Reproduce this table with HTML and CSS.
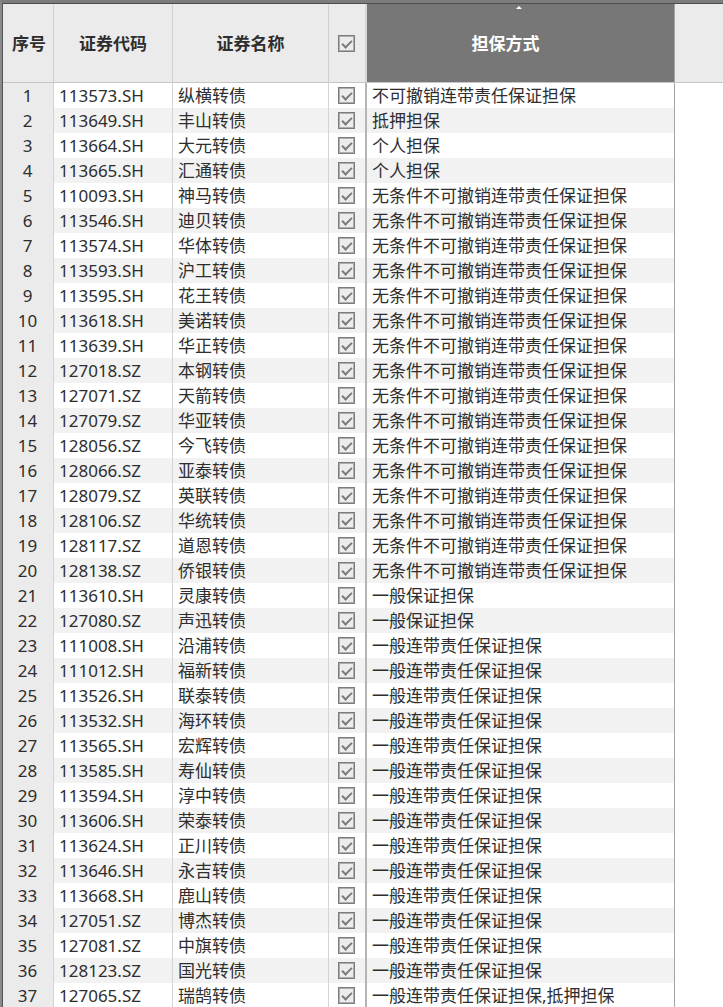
FILE: index.html
```html
<!DOCTYPE html>
<html lang="zh-CN">
<head>
<meta charset="utf-8">
<title>担保方式</title>
<link rel="stylesheet" href="styles.css">
</head>
<body>
<div class="frame">
  <div class="grip"></div>
  <div class="row head">
    <div class="c c1">序号</div>
    <div class="c c2">证券代码</div>
    <div class="c c3">证券名称</div>
    <div class="c c4"><span class="cb"></span></div>
    <div class="c c5 sorted"><span class="arrow"></span><span class="ht">担保方式</span></div>
    <div class="c c6"></div>
  </div>
  <div class="body" id="body">
    <div class="row"><div class="c c1">1</div><div class="c c2">113573.SH</div><div class="c c3">纵横转债</div><div class="c c4"><span class="cb"></span></div><div class="c c5">不可撤销连带责任保证担保</div><div class="c c6"></div></div>
    <div class="row"><div class="c c1">2</div><div class="c c2">113649.SH</div><div class="c c3">丰山转债</div><div class="c c4"><span class="cb"></span></div><div class="c c5">抵押担保</div><div class="c c6"></div></div>
    <div class="row"><div class="c c1">3</div><div class="c c2">113664.SH</div><div class="c c3">大元转债</div><div class="c c4"><span class="cb"></span></div><div class="c c5">个人担保</div><div class="c c6"></div></div>
    <div class="row"><div class="c c1">4</div><div class="c c2">113665.SH</div><div class="c c3">汇通转债</div><div class="c c4"><span class="cb"></span></div><div class="c c5">个人担保</div><div class="c c6"></div></div>
    <div class="row"><div class="c c1">5</div><div class="c c2">110093.SH</div><div class="c c3">神马转债</div><div class="c c4"><span class="cb"></span></div><div class="c c5">无条件不可撤销连带责任保证担保</div><div class="c c6"></div></div>
    <div class="row"><div class="c c1">6</div><div class="c c2">113546.SH</div><div class="c c3">迪贝转债</div><div class="c c4"><span class="cb"></span></div><div class="c c5">无条件不可撤销连带责任保证担保</div><div class="c c6"></div></div>
    <div class="row"><div class="c c1">7</div><div class="c c2">113574.SH</div><div class="c c3">华体转债</div><div class="c c4"><span class="cb"></span></div><div class="c c5">无条件不可撤销连带责任保证担保</div><div class="c c6"></div></div>
    <div class="row"><div class="c c1">8</div><div class="c c2">113593.SH</div><div class="c c3">沪工转债</div><div class="c c4"><span class="cb"></span></div><div class="c c5">无条件不可撤销连带责任保证担保</div><div class="c c6"></div></div>
    <div class="row"><div class="c c1">9</div><div class="c c2">113595.SH</div><div class="c c3">花王转债</div><div class="c c4"><span class="cb"></span></div><div class="c c5">无条件不可撤销连带责任保证担保</div><div class="c c6"></div></div>
    <div class="row"><div class="c c1">10</div><div class="c c2">113618.SH</div><div class="c c3">美诺转债</div><div class="c c4"><span class="cb"></span></div><div class="c c5">无条件不可撤销连带责任保证担保</div><div class="c c6"></div></div>
    <div class="row"><div class="c c1">11</div><div class="c c2">113639.SH</div><div class="c c3">华正转债</div><div class="c c4"><span class="cb"></span></div><div class="c c5">无条件不可撤销连带责任保证担保</div><div class="c c6"></div></div>
    <div class="row"><div class="c c1">12</div><div class="c c2">127018.SZ</div><div class="c c3">本钢转债</div><div class="c c4"><span class="cb"></span></div><div class="c c5">无条件不可撤销连带责任保证担保</div><div class="c c6"></div></div>
    <div class="row"><div class="c c1">13</div><div class="c c2">127071.SZ</div><div class="c c3">天箭转债</div><div class="c c4"><span class="cb"></span></div><div class="c c5">无条件不可撤销连带责任保证担保</div><div class="c c6"></div></div>
    <div class="row"><div class="c c1">14</div><div class="c c2">127079.SZ</div><div class="c c3">华亚转债</div><div class="c c4"><span class="cb"></span></div><div class="c c5">无条件不可撤销连带责任保证担保</div><div class="c c6"></div></div>
    <div class="row"><div class="c c1">15</div><div class="c c2">128056.SZ</div><div class="c c3">今飞转债</div><div class="c c4"><span class="cb"></span></div><div class="c c5">无条件不可撤销连带责任保证担保</div><div class="c c6"></div></div>
    <div class="row"><div class="c c1">16</div><div class="c c2">128066.SZ</div><div class="c c3">亚泰转债</div><div class="c c4"><span class="cb"></span></div><div class="c c5">无条件不可撤销连带责任保证担保</div><div class="c c6"></div></div>
    <div class="row"><div class="c c1">17</div><div class="c c2">128079.SZ</div><div class="c c3">英联转债</div><div class="c c4"><span class="cb"></span></div><div class="c c5">无条件不可撤销连带责任保证担保</div><div class="c c6"></div></div>
    <div class="row"><div class="c c1">18</div><div class="c c2">128106.SZ</div><div class="c c3">华统转债</div><div class="c c4"><span class="cb"></span></div><div class="c c5">无条件不可撤销连带责任保证担保</div><div class="c c6"></div></div>
    <div class="row"><div class="c c1">19</div><div class="c c2">128117.SZ</div><div class="c c3">道恩转债</div><div class="c c4"><span class="cb"></span></div><div class="c c5">无条件不可撤销连带责任保证担保</div><div class="c c6"></div></div>
    <div class="row"><div class="c c1">20</div><div class="c c2">128138.SZ</div><div class="c c3">侨银转债</div><div class="c c4"><span class="cb"></span></div><div class="c c5">无条件不可撤销连带责任保证担保</div><div class="c c6"></div></div>
    <div class="row"><div class="c c1">21</div><div class="c c2">113610.SH</div><div class="c c3">灵康转债</div><div class="c c4"><span class="cb"></span></div><div class="c c5">一般保证担保</div><div class="c c6"></div></div>
    <div class="row"><div class="c c1">22</div><div class="c c2">127080.SZ</div><div class="c c3">声迅转债</div><div class="c c4"><span class="cb"></span></div><div class="c c5">一般保证担保</div><div class="c c6"></div></div>
    <div class="row"><div class="c c1">23</div><div class="c c2">111008.SH</div><div class="c c3">沿浦转债</div><div class="c c4"><span class="cb"></span></div><div class="c c5">一般连带责任保证担保</div><div class="c c6"></div></div>
    <div class="row"><div class="c c1">24</div><div class="c c2">111012.SH</div><div class="c c3">福新转债</div><div class="c c4"><span class="cb"></span></div><div class="c c5">一般连带责任保证担保</div><div class="c c6"></div></div>
    <div class="row"><div class="c c1">25</div><div class="c c2">113526.SH</div><div class="c c3">联泰转债</div><div class="c c4"><span class="cb"></span></div><div class="c c5">一般连带责任保证担保</div><div class="c c6"></div></div>
    <div class="row"><div class="c c1">26</div><div class="c c2">113532.SH</div><div class="c c3">海环转债</div><div class="c c4"><span class="cb"></span></div><div class="c c5">一般连带责任保证担保</div><div class="c c6"></div></div>
    <div class="row"><div class="c c1">27</div><div class="c c2">113565.SH</div><div class="c c3">宏辉转债</div><div class="c c4"><span class="cb"></span></div><div class="c c5">一般连带责任保证担保</div><div class="c c6"></div></div>
    <div class="row"><div class="c c1">28</div><div class="c c2">113585.SH</div><div class="c c3">寿仙转债</div><div class="c c4"><span class="cb"></span></div><div class="c c5">一般连带责任保证担保</div><div class="c c6"></div></div>
    <div class="row"><div class="c c1">29</div><div class="c c2">113594.SH</div><div class="c c3">淳中转债</div><div class="c c4"><span class="cb"></span></div><div class="c c5">一般连带责任保证担保</div><div class="c c6"></div></div>
    <div class="row"><div class="c c1">30</div><div class="c c2">113606.SH</div><div class="c c3">荣泰转债</div><div class="c c4"><span class="cb"></span></div><div class="c c5">一般连带责任保证担保</div><div class="c c6"></div></div>
    <div class="row"><div class="c c1">31</div><div class="c c2">113624.SH</div><div class="c c3">正川转债</div><div class="c c4"><span class="cb"></span></div><div class="c c5">一般连带责任保证担保</div><div class="c c6"></div></div>
    <div class="row"><div class="c c1">32</div><div class="c c2">113646.SH</div><div class="c c3">永吉转债</div><div class="c c4"><span class="cb"></span></div><div class="c c5">一般连带责任保证担保</div><div class="c c6"></div></div>
    <div class="row"><div class="c c1">33</div><div class="c c2">113668.SH</div><div class="c c3">鹿山转债</div><div class="c c4"><span class="cb"></span></div><div class="c c5">一般连带责任保证担保</div><div class="c c6"></div></div>
    <div class="row"><div class="c c1">34</div><div class="c c2">127051.SZ</div><div class="c c3">博杰转债</div><div class="c c4"><span class="cb"></span></div><div class="c c5">一般连带责任保证担保</div><div class="c c6"></div></div>
    <div class="row"><div class="c c1">35</div><div class="c c2">127081.SZ</div><div class="c c3">中旗转债</div><div class="c c4"><span class="cb"></span></div><div class="c c5">一般连带责任保证担保</div><div class="c c6"></div></div>
    <div class="row"><div class="c c1">36</div><div class="c c2">128123.SZ</div><div class="c c3">国光转债</div><div class="c c4"><span class="cb"></span></div><div class="c c5">一般连带责任保证担保</div><div class="c c6"></div></div>
    <div class="row"><div class="c c1">37</div><div class="c c2">127065.SZ</div><div class="c c3">瑞鹄转债</div><div class="c c4"><span class="cb"></span></div><div class="c c5">一般连带责任保证担保,抵押担保</div><div class="c c6"></div></div>
  </div>
</div>
</body>
</html>
```

FILE: styles.css
```css
html, body {
  margin: 0;
  padding: 0;
  background: #ffffff;
  overflow: hidden;
}

body {
  font-family: "Noto Sans", "Noto Sans CJK SC", sans-serif;
  font-size: 17px;
  color: #2e2e2e;
}

.frame {
  position: relative;
  height: 1007px;
  box-sizing: border-box;
  border-top: 3px solid #7c7c7c;
  border-left: 2px solid #8a8a8a;
  overflow: hidden;
}

.frame::before {
  content: "";
  display: block;
  height: 1px;
  background: #4c4c4c;
}

.frame::after {
  content: "";
  position: absolute;
  top: 0;
  bottom: 0;
  left: 0;
  width: 1px;
  background: #555555;
}

.grip {
  position: absolute;
  left: -2px;
  top: 574px;
  width: 2px;
  height: 20px;
  background: repeating-linear-gradient(to bottom, #555 0 1px, transparent 1px 3px);
}

.row {
  display: grid;
  grid-template-columns: 51px 119px 156px 38px 308px 1fr;
  height: 25px;
  line-height: 25px;
  margin-left: 1px;
}

.c {
  box-sizing: border-box;
  white-space: nowrap;
  overflow: hidden;
}

.c1 {
  background: #ebebeb;
  border-right: 1px solid #d2d2d2;
  text-align: center;
  padding-right: 1px;
}

.c2, .c3 {
  padding-left: 5px;
  border-right: 1px solid #d4d4d4;
}

.c4 {
  border-right: 2px solid #b4b4b4;
  display: flex;
  align-items: center;
  justify-content: center;
  padding-right: 1px;
}

.c5 {
  padding-left: 5px;
  border-right: 1px solid #a4a4a4;
}

.body .row:nth-child(even) .c2,
.body .row:nth-child(even) .c3,
.body .row:nth-child(even) .c4,
.body .row:nth-child(even) .c5 {
  background: #f2f2f2;
}

.head {
  height: 78px;
  line-height: 77px;
  background: #ebebeb;
  border-bottom: 1px solid #c6c6c6;
  font-weight: bold;
}

.head .c {
  text-align: center;
  padding-left: 0;
  background: #ebebeb;
  border-top: 1px solid #ebebeb;
}

.head .c1 {
  padding-left: 3px;
}

.head .c1,
.head .c2,
.head .c3 {
  border-right-color: #cfcfcf;
}

.head .c4 {
  border-right: 2px solid #d6d6d6;
}

.head .c5 {
  position: relative;
  background: #777777;
  border-top-color: #777777;
  color: #ffffff;
  padding-right: 30px;
  border-right-color: #a4a4a4;
}

.arrow {
  position: absolute;
  left: 149px;
  top: 1px;
  width: 0;
  height: 0;
  border-left: 3px solid transparent;
  border-right: 3px solid transparent;
  border-bottom: 3px solid #ffffff;
}

.cb {
  position: relative;
  display: block;
  width: 17px;
  height: 17px;
  box-sizing: border-box;
  border: 1px solid #7c7c7c;
  box-shadow: inset 0 0 0 1px #adadad;
  background: #ececec;
}

.cb::after {
  content: "";
  position: absolute;
  left: 5px;
  top: 2px;
  width: 4px;
  height: 8px;
  border: solid #7c7c7c;
  border-width: 0 2px 2px 0;
  transform: rotate(45deg);
}
```
